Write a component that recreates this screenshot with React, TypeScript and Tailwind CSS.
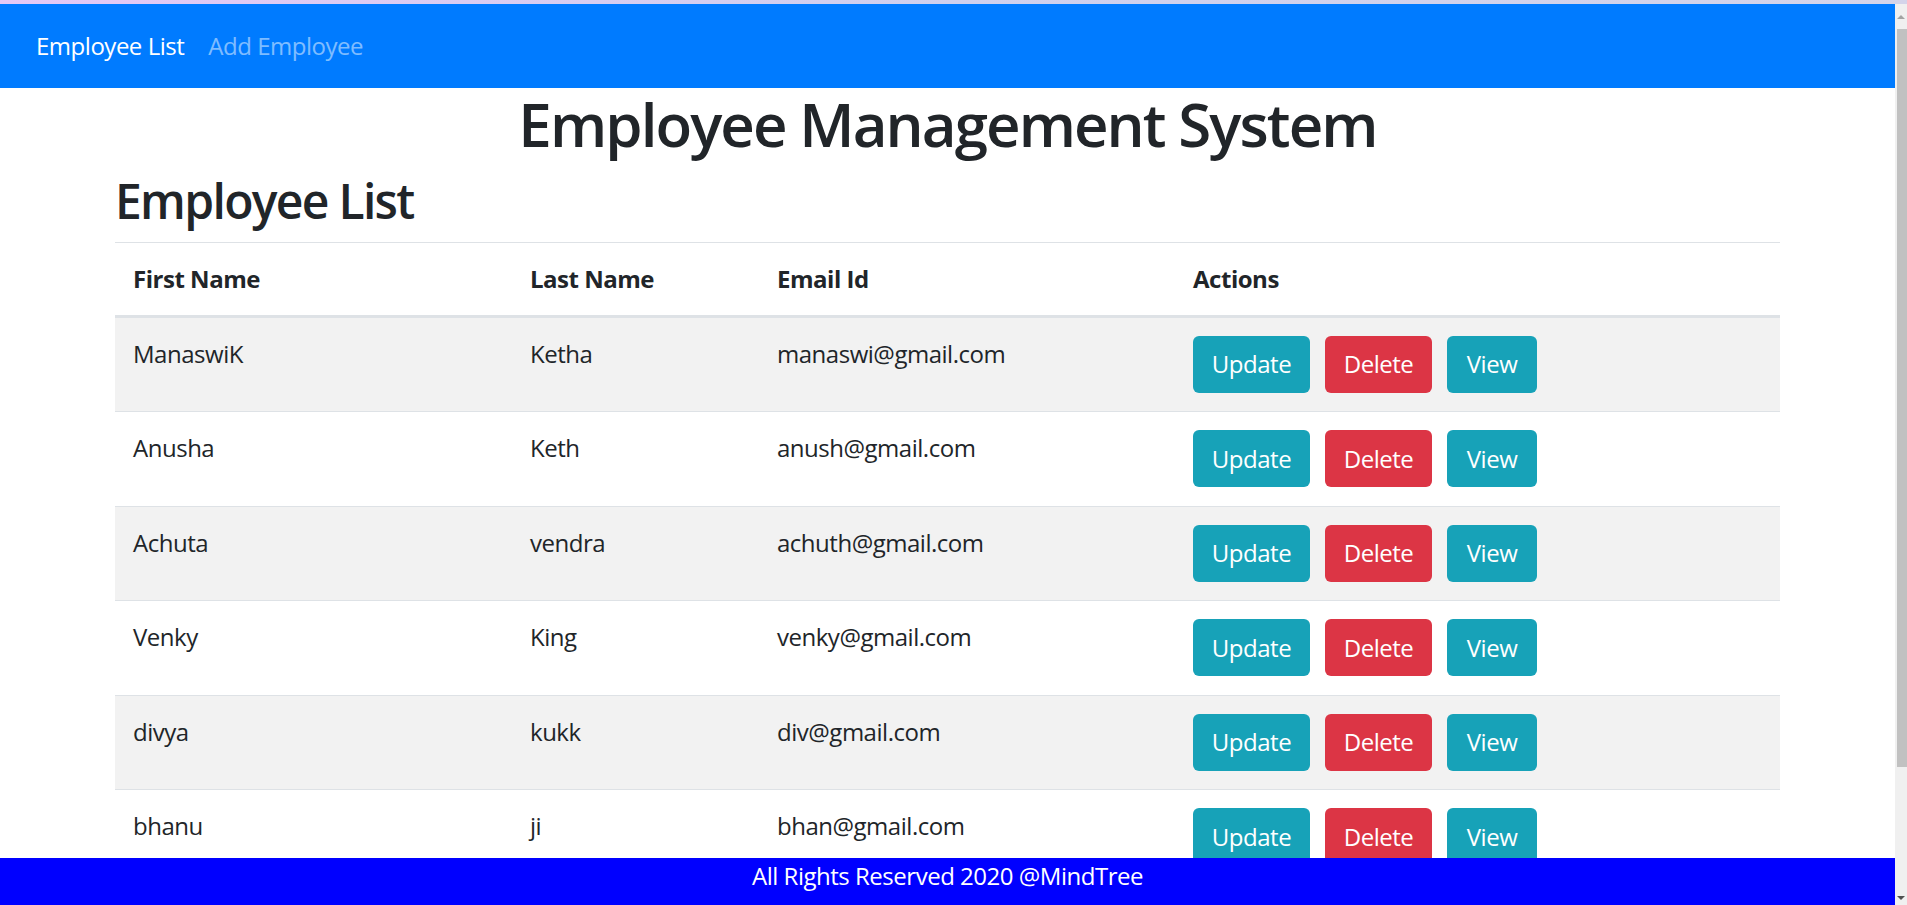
import React from 'react';

type Employee = { firstName: string; lastName: string; email: string };

const employees: Employee[] = [
  { firstName: 'ManaswiK', lastName: 'Ketha', email: 'manaswi@gmail.com' },
  { firstName: 'Anusha', lastName: 'Keth', email: 'anush@gmail.com' },
  { firstName: 'Achuta', lastName: 'vendra', email: 'achuth@gmail.com' },
  { firstName: 'Venky', lastName: 'King', email: 'venky@gmail.com' },
  { firstName: 'divya', lastName: 'kukk', email: 'div@gmail.com' },
  { firstName: 'bhanu', lastName: 'ji', email: 'bhan@gmail.com' },
];

const App: React.FC = () => {
  return (
    <div className="h-[905px] w-full overflow-hidden flex flex-col bg-white font-['Open_Sans',sans-serif] text-[#212529] tracking-[-0.03em]">
      {/* strip of desktop above the browser */}
      <div className="h-[4px] shrink-0 bg-gradient-to-r from-[#e4c8f6] via-[#cfd0ee] to-[#d4d4ea]"></div>

      <div className="flex-1 flex min-h-0">
        <div className="flex-1 flex flex-col min-w-0">
          <nav className="h-[84px] shrink-0 bg-[#007bff] flex items-center px-[24px]">
            <a className="px-[12px] text-[24px] leading-[36px] text-white">Employee List</a>
            <a className="px-[12px] text-[24px] leading-[36px] text-white/50">Add Employee</a>
          </nav>

          <main className="flex-1 min-h-0">
            <h1 className="text-center text-[60px] leading-[72px] font-semibold tracking-[-0.032em] mb-[12px]">Employee Management System</h1>
            <div className="w-[1665px] mx-auto">
              <h2 className="text-[48px] leading-[57.6px] font-semibold tracking-[-0.035em] mb-[12px]">Employee List</h2>
              <table className="w-full table-fixed border-collapse text-[24px] leading-[36px]">
                <colgroup>
                  <col className="w-[397px]" />
                  <col className="w-[247px]" />
                  <col className="w-[416px]" />
                  <col className="w-[605px]" />
                </colgroup>
                <thead>
                  <tr className="border-t-[1.5px] border-b-[3px] border-[#dee2e6]">
                    <th className="text-left font-bold px-[18px] py-[18px]">First Name</th>
                    <th className="text-left font-bold px-[18px] py-[18px]">Last Name</th>
                    <th className="text-left font-bold px-[18px] py-[18px]">Email Id</th>
                    <th className="text-left font-bold px-[18px] py-[18px]">Actions</th>
                  </tr>
                </thead>
                <tbody>
                  {employees.map((e, i) => (
                    <tr key={e.email} className={`${i > 0 ? 'border-t border-[#dee2e6]' : ''} ${i % 2 === 0 ? 'bg-[#f2f2f2]' : 'bg-white'}`}>
                      <td className="align-top px-[18px] pt-[18px] pb-[18.5px]">{e.firstName}</td>
                      <td className="align-top px-[18px] pt-[18px] pb-[18.5px]">{e.lastName}</td>
                      <td className="align-top px-[18px] pt-[18px] pb-[18.5px]">{e.email}</td>
                      <td className="align-top px-[18px] pt-[18px] pb-[18.5px]">
                        <div className="flex gap-[15px]">
                          <button className="w-[117px] h-[57px] rounded-[6px] bg-[#17a2b8] text-white text-[24px]">Update</button>
                          <button className="w-[107px] h-[57px] rounded-[6px] bg-[#dc3545] text-white text-[24px]">Delete</button>
                          <button className="w-[90px] h-[57px] rounded-[6px] bg-[#17a2b8] text-white text-[24px]">View</button>
                        </div>
                      </td>
                    </tr>
                  ))}
                </tbody>
              </table>
            </div>
          </main>

          <footer className="relative z-10 h-[47px] shrink-0 bg-[#0000ff] text-white text-center text-[24px] leading-[36px]">
            All Rights Reserved 2020 @MindTree
          </footer>
        </div>

        {/* browser scrollbar */}
        <div className="w-[12px] shrink-0 bg-[#f0f0f0] flex flex-col items-end">
          <div className="h-[25px] w-full flex items-center justify-center">
            <div className="w-0 h-0 border-l-[4px] border-r-[4px] border-b-[4px] border-l-transparent border-r-transparent border-b-[#a3a3a3]"></div>
          </div>
          <div className="h-[738px] w-[10px] bg-[#c1c1c1]"></div>
          <div className="flex-1"></div>
          <div className="h-[14px] w-full flex items-center justify-center">
            <div className="w-0 h-0 border-l-[4px] border-r-[4px] border-t-[4px] border-l-transparent border-r-transparent border-t-[#505050]"></div>
          </div>
        </div>
      </div>
    </div>
  );
};

export default App;
